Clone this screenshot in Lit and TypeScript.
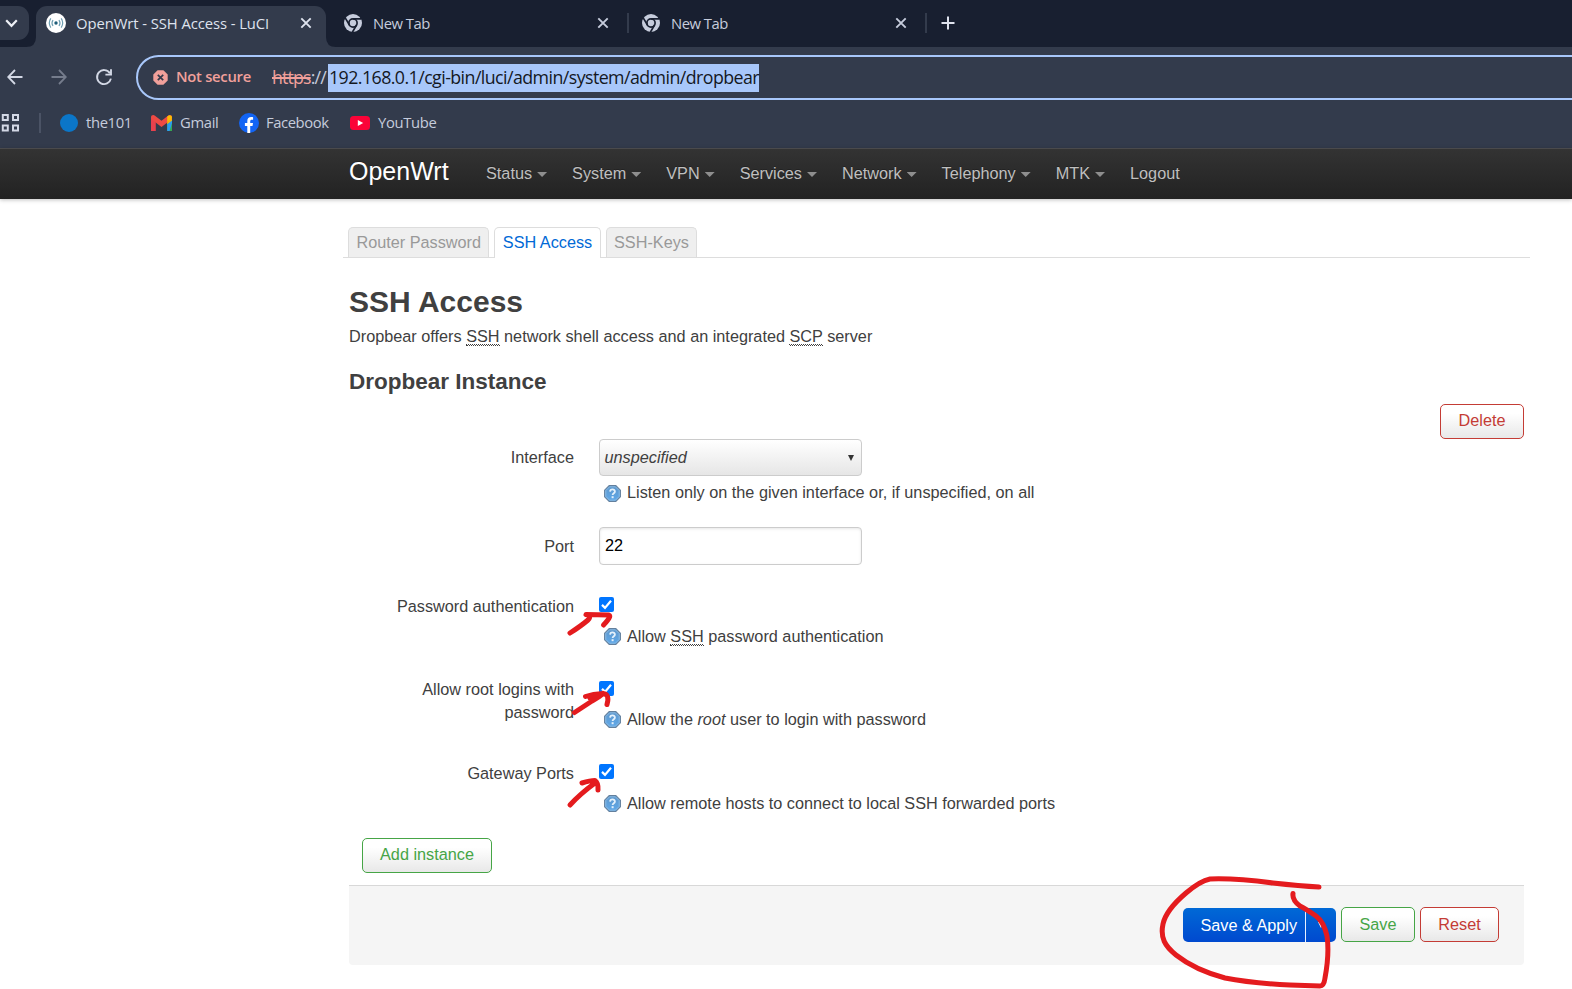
import { LitElement, html, css, svg } from "lit";
import { customElement } from "lit/decorators.js";

const closeIcon = html`<svg class="close" width="12" height="12" viewBox="0 0 12 12" fill="none" stroke="currentColor" stroke-width="1.9"><path d="M1.3 1.3 10.7 10.7M10.7 1.3 1.3 10.7"/></svg>`;

const chromeIcon = html`<svg width="18" height="18" viewBox="0 0 18 18">
  <circle cx="9" cy="9" r="9" fill="#c6ccdc"/>
  <circle cx="9" cy="9" r="4.1" fill="none" stroke="#181f30" stroke-width="1.7"/>
  <path d="M9 4.9H17.4M5.45 11.05 1.2 3.9M12.55 11.05 8.4 18.2" stroke="#181f30" stroke-width="1.7"/>
</svg>`;

const helpIcon = html`<svg class="help" width="17" height="17" viewBox="0 0 17 17">
  <defs><linearGradient id="g" x1="0" y1="0" x2="0" y2="1"><stop offset="0" stop-color="#5f97cb"/><stop offset="1" stop-color="#5fa9ea"/></linearGradient></defs>
  <path d="M5.2.6h6.6l4.6 4.6v6.6l-4.6 4.6H5.2L.6 11.8V5.2z" fill="url(#g)" stroke="#64809d" stroke-width="1.1"/>
  <path d="M5.6 1.8h5.8l3.8 3.8v5.8l-3.8 3.8H5.6l-3.8-3.8V5.6z" fill="none" stroke="#8fbde4" stroke-width=".9"/>
  <path d="M6.1 6.6C6.2 3.6 11 3.8 10.9 6.6 10.8 8.2 8.6 8.2 8.6 10" fill="none" stroke="#e4f1fc" stroke-width="1.8"/>
  <rect x="7.6" y="11.2" width="2" height="2" fill="#e4f1fc"/>
</svg>`;

@customElement("browser-chrome")
class BrowserChrome extends LitElement {
  static styles = css`
    :host { display: block; height: 148px; overflow: hidden; background: #333b4c; color: #dfe3ee;
      font: 15px/20px "Open Sans", "Noto Sans", sans-serif; }
    * { box-sizing: border-box; }
    svg { display: block; flex: none; }
    .strip { display: flex; height: 47px; background: #181f30; }
    .search { width: 29px; height: 34px; margin-top: 6px; border-radius: 0 11px 11px 0; background: #333b4c; display: flex; align-items: center; justify-content: flex-end; padding-right: 11px; }
    .foot { align-self: flex-end; }
    .foot.l { margin-left: -3px; }
    .tab { display: flex; align-items: center; flex: none; }
    .active { width: 290px; height: 41px; margin-top: 6px; border-radius: 11px 11px 0 0; background: #333b4c; padding: 0 14px 7px 10px; }
    .rest { width: 291px; height: 46px; padding: 0 18px 0 8px; color: #c6ccdc; }
    .rest.wide { width: 296px; padding: 0 18px 0 13px; }
    .title { margin-left: 10px; flex: 1; white-space: nowrap; font-size: 14.8px; padding-bottom: 1px; }
    .active .title { letter-spacing: -.07px; }
    .rest .title { margin-left: 11px; letter-spacing: -.5px; }
    .div { width: 2px; height: 20px; margin-top: 13px; background: #333b4c; flex: none; }
    .plus { margin: 16px 0 0 14px; }
    .bar { display: flex; align-items: center; height: 61px; }
    .arrows { display: flex; flex: none; width: 136px; padding-left: 7px; align-items: center; margin-top: -2px; }
    .arrows svg + svg { margin-left: 28px; }
    .omni { flex: none; width: 1480px; height: 45px; border: 2.5px solid #a8c7fa; border-radius: 23px; display: flex; align-items: center; padding-left: 15px; }
    .ns { font-size: 14.8px; font-weight: 600; color: #f1a09b; margin-left: 8px; width: 96px; padding-bottom: 3px; white-space: nowrap; letter-spacing: -.28px; }
    .url { font-size: 17.8px; line-height: 27px; display: flex; white-space: nowrap; }
    .proto { width: 56px; letter-spacing: -.85px; color: #c6ccdc; }
    .https { color: #f1a09b; text-decoration: line-through 2px; }
    .sel { width: 431px; background: #a8c7fa; color: #14181f; letter-spacing: -.56px; padding-left: 1px; height: 28px; }
    .marks { display: flex; align-items: center; height: 30px; color: #c6ccdc; }
    .marks span { margin-left: 8px; padding-bottom: 2px; white-space: nowrap; letter-spacing: -.35px; font-size: 14.8px; flex: none; }
    .sep { width: 2px; height: 20px; background: #4b5365; margin: 0 20px 0 19px; flex: none; }
    .marks .m1 { width: 65px; } .marks .m2 { width: 59px; } .marks .m3 { width: 84px; margin-left: 7px; letter-spacing: -.42px; }
    .dot { width: 18px; height: 18px; border-radius: 50%; background: #0b76c8; flex: none; margin-left: -1px; }
  `;
  render() {
    return html`
      <div class="strip">
        <div class="search"><svg width="13" height="9" viewBox="0 0 13 9" fill="none" stroke="#eef0f6" stroke-width="2.2"><path d="M1.2 1.3 6.5 6.8 11.8 1.3"/></svg></div>
        <svg class="foot l" width="10" height="10"><path d="M10 0V10H0Q10 10 10 0" fill="#333b4c"/></svg>
        <div class="tab active">
          <svg width="20" height="20" viewBox="0 0 20 20" fill="none" stroke="#6f9fb2" stroke-width="1.2"><circle cx="10" cy="10" r="10" fill="#fff" stroke="none"/><circle cx="10" cy="10" r="1.7" fill="#1d5d78" stroke="none"/><path d="M7 7Q5 10 7 13M13 7Q15 10 13 13M4.8 5.400Q1.800 10 4.800 14.600M15.200 5.400Q18.200 10 15.200 14.600"/></svg>
          <div class="title">OpenWrt - SSH Access - LuCI</div>${closeIcon}
        </div>
        <svg class="foot" width="10" height="10"><path d="M0 0V10H10Q0 10 0 0" fill="#333b4c"/></svg>
        <div class="tab rest">${chromeIcon}<div class="title">New Tab</div>${closeIcon}</div>
        <div class="div"></div>
        <div class="tab rest wide">${chromeIcon}<div class="title">New Tab</div>${closeIcon}</div>
        <div class="div"></div>
        <svg class="plus" width="14" height="14" viewBox="0 0 14 14" stroke="#dfe3ee" stroke-width="2"><path d="M7 .5V13.5M.5 7H13.5"/></svg>
      </div>
      <div class="bar">
        <div class="arrows">
          <svg width="16" height="16" viewBox="0 0 16 16" fill="none" stroke="#d3d8e5" stroke-width="1.8"><path d="M15.5 8H1.5M8 1 1.2 8 8 15"/></svg>
          <svg width="16" height="16" viewBox="0 0 16 16" fill="none" stroke="#757c8c" stroke-width="1.8"><path d="M.5 8H14.5M8 1 14.8 8 8 15"/></svg>
          <svg width="18" height="18" viewBox="0 0 18 18" fill="none" stroke="#d3d8e5" stroke-width="1.9"><path d="M14.9 5.2A7 7 0 1 0 15.9 10.6M16 1.2V6.6H10.4"/></svg>
        </div>
        <div class="omni">
          <svg width="15" height="15" viewBox="0 0 15 15"><path d="M4.6.3h5.8l4.3 4.3v5.8l-4.3 4.3H4.6L.3 10.4V4.6z" fill="#f1a09b"/><path d="M4.8 4.8 10.2 10.2M10.2 4.8 4.8 10.2" stroke="#333b4c" stroke-width="1.7"/></svg>
          <div class="ns">Not secure</div>
          <div class="url"><div class="proto"><span class="https">https</span>://</div><div class="sel">192.168.0.1/cgi-bin/luci/admin/system/admin/dropbear</div></div>
        </div>
      </div>
      <div class="marks">
        <svg width="20" height="18" viewBox="0 0 20 18" fill="none" stroke="#d3d8e5" stroke-width="2"><path d="M2.8 1h5v5h-5zM13 1h5v5h-5zM2.8 11.5h5v5h-5zM13 11.5h5v5h-5z"/></svg>
        <div class="sep"></div>
        <div class="dot"></div><span class="m1">the101</span>
        <svg width="21" height="16" viewBox="0 0 21 16"><path d="M0 2v14h4.8V7z" fill="#e8414d"/><path d="M16.2 7v9H21V5z" fill="#34a853"/><path d="M16.2 5.5 21 2v4l-4.8 3.6z" fill="#fbbc04"/><path d="M16.2 9.2V16h2.4L21 8V5.6z" fill="#2a9df0"/><path d="M0 2.4C0 .2 2.4-.6 4 .8l6.5 5 6.5-5C18.600-.6 21 .2 21 2.400 21 3.600 20.500 4.400 19.600 5L10.500 12 1.400 5C.5 4.400 0 3.600 0 2.400z" fill="#ee4a44"/><path d="M16.200 1.400C18.500-.6 21 .2 21 2.500 21 4 20 4.700 19.600 5L16.200 7.600z" fill="#fbbc04"/></svg>
        <span class="m2">Gmail</span>
        <svg width="20" height="20" viewBox="0 0 20 20"><circle cx="10" cy="10" r="10" fill="#1264f4"/><path d="M8.300 20V13H5.900V10h2.400V8C8.300 5.300 9.700 4 12.200 4c.8 0 1.400.1 1.900.2v2.600h-1.300c-1.200 0-1.600.6-1.600 1.600V10h2.800l-.5 3h-2.300v7z" fill="#fff"/></svg>
        <span class="m3">Facebook</span>
        <svg width="20" height="14" viewBox="0 0 20 14"><rect width="20" height="14" rx="3.500" fill="#fb0338"/><path d="M7.800 3.900v6.200L13.200 7z" fill="#fff"/></svg>
        <span>YouTube</span>
      </div>`;
  }
}

@customElement("app-root")
class AppRoot extends LitElement {
  static styles = css`
    :host { display: block; position: relative; width: 1572px; height: 989px; overflow: hidden; background: #fff; color: #404040;
      font: 16.25px/22.5px "Liberation Sans", Arial, sans-serif; }
    * { box-sizing: border-box; }
    .nav { height: 51px; border-top: 1px solid #4a4a4c; background: linear-gradient(#333, #222); box-shadow: 0 1px 4px rgba(0,0,0,.25); display: flex; padding-left: 349px; color: #bfbfbf; text-shadow: 0 -1px 0 rgba(0,0,0,.25); }
    .brand { width: 124.5px; font-size: 25px; line-height: 44px; color: #fff; }
    .item { display: flex; align-items: center; padding: 0 12.5px; white-space: nowrap; height: 49px; }
    .caret { width: 10px; height: 5px; margin: 2px 0 0 5px; background: #8e8e8e; clip-path: polygon(0 0, 100% 0, 50% 100%); }
    .tabs { display: flex; gap: 5px; height: 31px; margin: 28px 42px 0 343px; padding-left: 5px; border-bottom: 1px solid #ddd; }
    .tab { height: 30px; padding: 3px 7.400px 0; border: 1px solid #ddd; border-bottom: 0; border-radius: 5px 5px 0 0; background: #efefef; color: #999; white-space: nowrap; }
    .tab.on { height: 31px; background: #fff; color: #0069d6; }
    .main { margin: 0 48px 0 349px; }
    h2 { font-size: 30px; line-height: 40px; margin: 0; padding-top: 24px; }
    h3 { font-size: 22.500px; line-height: 30px; margin: 0; }
    .desc { margin: 3px 0 19.500px; }
    abbr { text-decoration: underline dotted 1px; text-underline-offset: 2px; text-decoration-skip-ink: none; border-bottom: 1px dotted #404040; }
    .btn { display: inline-flex; justify-content: center; height: 35px; padding-top: 5px; border: 1px solid; border-radius: 5px; background: linear-gradient(#fff 25%, #e8e8e8); white-space: nowrap; }
    .red { color: #c43c35; } .green { color: #46a546; }
    .del { width: 84px; padding-top: 4px; }
    .delrow { display: flex; justify-content: flex-end; padding-top: 7px; height: 42px; }
    .form { display: grid; grid-template-columns: 225px 1fr; column-gap: 25px; grid-template-rows: 88px 61px 83.500px 83.500px 83px; }
    .lab { text-align: right; padding: 6.500px 0 0 45px; }
    .lab.port { padding-top: 8px; }
    .sel { width: 263px; height: 37px; border: 1px solid #ccc; border-radius: 4px; background: linear-gradient(#fff, #e6e6e6); display: flex; justify-content: space-between; padding: 6px 7px 0 4.500px; }
    .arrow { width: 6px; height: 6px; margin-top: 9px; background: #333; clip-path: polygon(0 0, 100% 0, 50% 100%); }
    .inp { width: 263px; height: 38px; border: 1px solid #ccc; border-radius: 4px; box-shadow: inset 0 1px 3px rgba(0,0,0,.1); padding: 6px 5px; color: #000; }
    .box { display: block; margin-top: 9px; }
    .hint { display: flex; padding-left: 5px; margin-top: 12.500px; white-space: pre; }
    .sel + .hint { margin-top: 4.500px; }
    .help { margin: 3px 6px 0 0; flex: none; }
    .sel + .hint .help { margin-top: 4px; }
    .add { width: 130px; margin-left: 13px; padding-top: 4px; }
    .foot { margin-top: 12px; height: 80px; border-top: 1px solid #d8d8d8; background: #f5f5f5; border-radius: 0 0 4px 4px; display: flex; justify-content: flex-end; gap: 5px; padding: 21px 25px 0 0; }
    .apply { display: flex; width: 153px; height: 34px; margin-top: 1px; border-radius: 5px; background: linear-gradient(#0069d6, #0049cf); color: #fff; }
    .a1 { width: 123px; text-align: center; padding: 6px 0 0 9.500px; border-right: 1px solid #e8f0ff; }
    .a2 { width: 6px; height: 6px; margin: 14px 0 0 12px; background: #fff; clip-path: polygon(0 0, 100% 0, 50% 100%); }
    .save { width: 74px; } .reset { width: 79px; }
    .ink { position: absolute; left: 0; top: 0; }
  `;

  check() {
    return html`<svg class="box" width="15" height="15" viewBox="0 0 15 15"><rect width="15" height="15" rx="2" fill="#0075ff"/><path d="M3 7.900 6 10.900 12 3.700" fill="none" stroke="#fff" stroke-width="2.200"/></svg>`;
  }

  render() {
    const menus = ["Status", "System", "VPN", "Services", "Network", "Telephony", "MTK"];
    return html`
      <browser-chrome></browser-chrome>
      <div class="nav">
        <div class="brand">OpenWrt</div>
        ${menus.map((m) => html`<div class="item">${m}<span class="caret"></span></div>`)}
        <div class="item">Logout</div>
      </div>
      <div class="tabs"><div class="tab">Router Password</div><div class="tab on">SSH Access</div><div class="tab">SSH-Keys</div></div>
      <div class="main">
        <h2>SSH Access</h2>
        <div class="desc">Dropbear offers <abbr>SSH</abbr> network shell access and an integrated <abbr>SCP</abbr> server</div>
        <h3>Dropbear Instance</h3>
        <div class="delrow"><div class="btn red del">Delete</div></div>
        <div class="form">
          <div class="lab">Interface</div>
          <div><div class="sel"><em>unspecified</em><span class="arrow"></span></div><div class="hint">${helpIcon}<span>Listen only on the given interface or, if unspecified, on all</span></div></div>
          <div class="lab port">Port</div>
          <div><div class="inp">22</div></div>
          <div class="lab">Password authentication</div>
          <div>${this.check()}<div class="hint">${helpIcon}<span>Allow <abbr>SSH</abbr> password authentication</span></div></div>
          <div class="lab">Allow root logins with password</div>
          <div>${this.check()}<div class="hint">${helpIcon}<span>Allow the <em>root</em> user to login with password</span></div></div>
          <div class="lab">Gateway Ports</div>
          <div>${this.check()}<div class="hint">${helpIcon}<span>Allow remote hosts to connect to local SSH forwarded ports</span></div></div>
        </div>
        <div class="btn green add">Add instance</div>
        <div class="foot">
          <div class="apply"><div class="a1">Save &amp; Apply</div><div class="a2"></div></div>
          <div class="btn green save">Save</div>
          <div class="btn red reset">Reset</div>
        </div>
      </div>
      <svg class="ink" width="1572" height="989" viewBox="0 0 1572 989" fill="none" stroke="#e41b1e" stroke-width="5" stroke-linecap="round" stroke-linejoin="round">
        ${svg`<path d="M570 633Q581 626 588 620Q592 616 586 614.500L609 615Q612 616 603.500 625"/>
        <path d="M574.500 712.500 592 701Q601 696 603 693.500M585.500 696.500Q593 694 603 693.500Q610 694 607 704.500M590 698 600 694"/>
        <path d="M570 805Q580 794 595 783M582 783Q590 780.500 595 780.500Q598.500 783 598 790"/>
        <path d="M1319 887Q1300 886 1273 883Q1235 878 1210 879Q1200 881 1186 893Q1166 910 1163 924C1160 938 1165 946 1176 955Q1195 970 1225 978Q1250 983 1290 985L1320 986Q1324 986 1325 978C1328 962 1329 950 1327 936Q1324 922 1316 916Q1306 909 1300 906Q1292 900 1293 893.500"/>`}
      </svg>`;
  }
}
